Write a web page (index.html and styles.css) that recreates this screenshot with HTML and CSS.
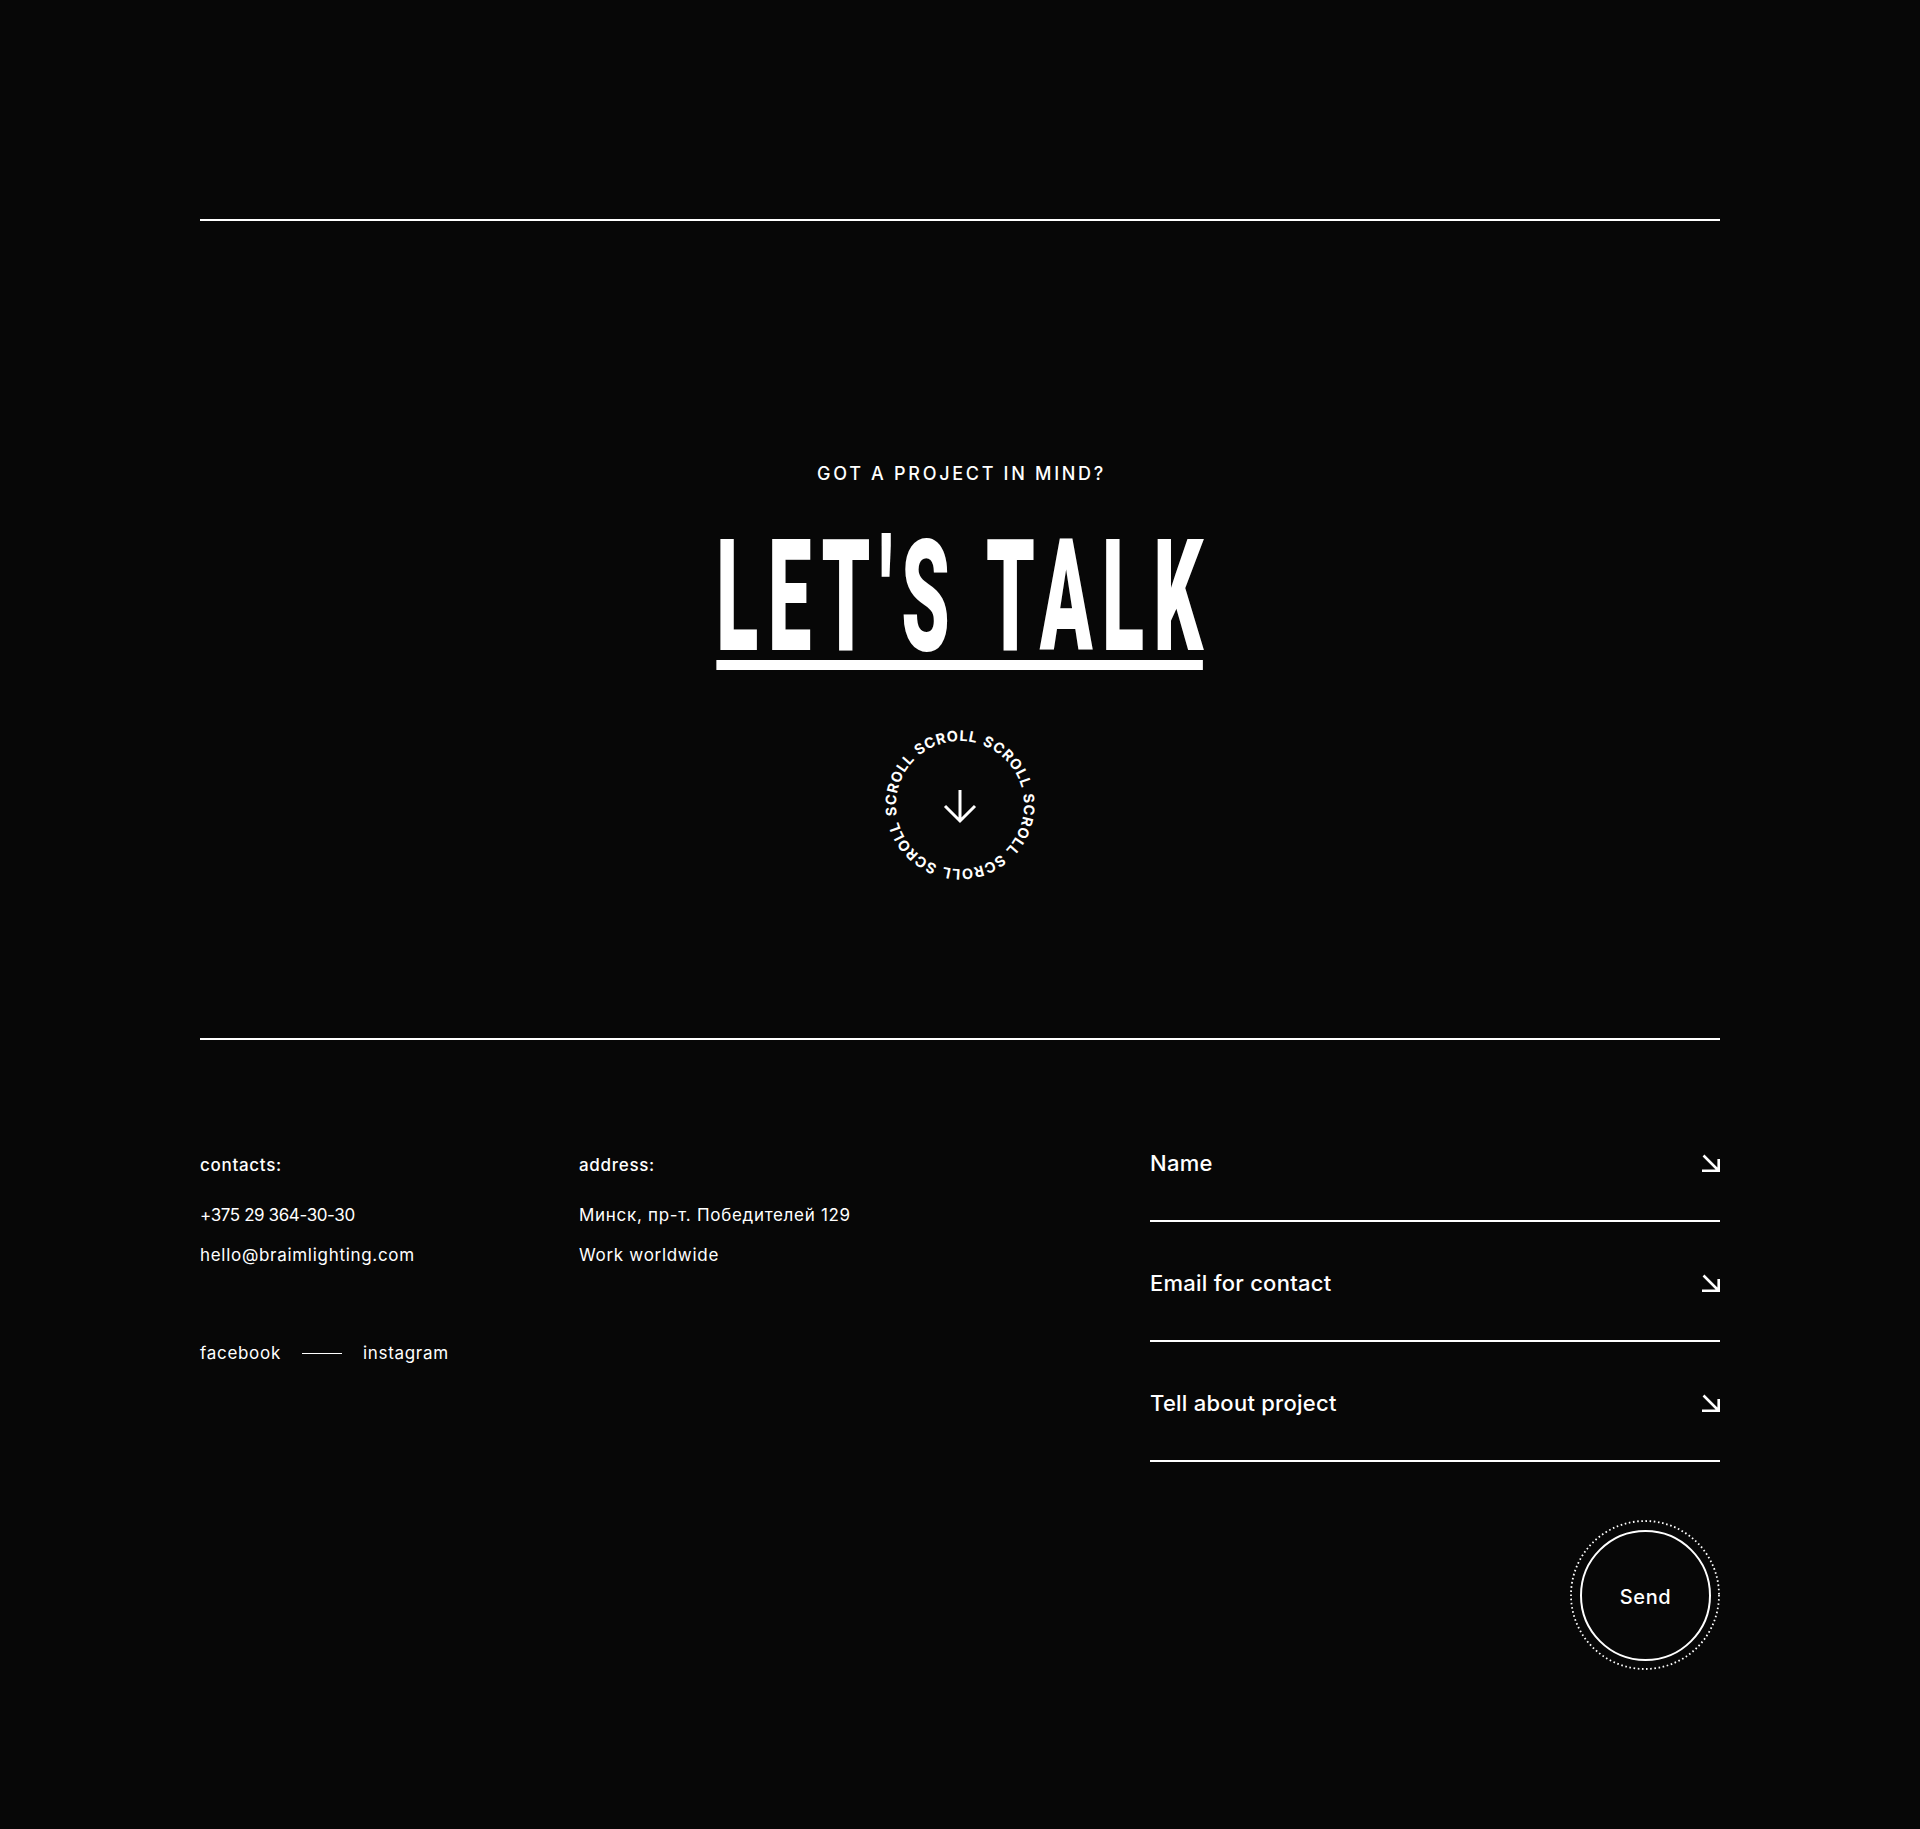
FILE: index.html
```html
<!DOCTYPE html>
<html lang="en">
<head>
<meta charset="utf-8">
<title>Let's talk</title>
<link rel="stylesheet" href="styles.css">
</head>
<body>
<main class="page">
  <div class="rule"></div>
  <section class="hero">
    <p class="eyebrow">GOT A PROJECT IN MIND?</p>
    <h1 class="title"><span class="title-text">LET'S TAL<span class="title-last">K</span></span></h1>
    <div class="scroll">
      <svg class="scroll-svg" viewBox="0 0 150 150" width="150" height="150">
        <defs>
          <path id="scroll-circle" d="M 11,75 A 64,64 0 1,1 139,75 A 64,64 0 1,1 11,75"/>
        </defs>
        <g transform="rotate(50 75 75)">
          <text class="scroll-text"><textPath href="#scroll-circle" startOffset="0">SCROLL</textPath></text>
          <text class="scroll-text"><textPath href="#scroll-circle" startOffset="67.02">SCROLL</textPath></text>
          <text class="scroll-text"><textPath href="#scroll-circle" startOffset="134.04">SCROLL</textPath></text>
          <text class="scroll-text"><textPath href="#scroll-circle" startOffset="201.06">SCROLL</textPath></text>
          <text class="scroll-text"><textPath href="#scroll-circle" startOffset="268.08">SCROLL</textPath></text>
          <text class="scroll-text"><textPath href="#scroll-circle" startOffset="335.1">SCROLL</textPath></text>
        </g>
        <path d="M75 60 V91 M60 76 L75 91 L90 76" stroke="#fff" stroke-width="3" fill="none"/>
      </svg>
    </div>
  </section>
  <div class="rule"></div>
  <footer class="footer">
    <div class="col">
      <h3 class="col-title">contacts:</h3>
      <ul class="list">
        <li class="phone">+375 29 364-30-30</li>
        <li>hello@braimlighting.com</li>
      </ul>
      <div class="social">
        <a class="social-link" href="#">facebook</a>
        <span class="dash"></span>
        <a class="social-link" href="#">instagram</a>
      </div>
    </div>
    <div class="col">
      <h3 class="col-title">address:</h3>
      <ul class="list">
        <li>Минск, пр-т. Победителей 129</li>
        <li>Work worldwide</li>
      </ul>
    </div>
    <form class="form">
      <label class="field"><span class="field-label">Name</span>
        <svg class="field-arrow" viewBox="0 0 18 18" width="18" height="18"><path d="M1.5 1.5 L16 16 M0 16.7 H18 M16.7 5 V18" stroke="#fff" stroke-width="2.6" fill="none"/></svg>
      </label>
      <label class="field"><span class="field-label">Email for contact</span>
        <svg class="field-arrow" viewBox="0 0 18 18" width="18" height="18"><path d="M1.5 1.5 L16 16 M0 16.7 H18 M16.7 5 V18" stroke="#fff" stroke-width="2.6" fill="none"/></svg>
      </label>
      <label class="field"><span class="field-label">Tell about project</span>
        <svg class="field-arrow" viewBox="0 0 18 18" width="18" height="18"><path d="M1.5 1.5 L16 16 M0 16.7 H18 M16.7 5 V18" stroke="#fff" stroke-width="2.6" fill="none"/></svg>
      </label>
      <div class="send-row">
        <div class="send-wrap">
          <svg class="send-ring" viewBox="0 0 150 150" width="150" height="150"><circle cx="75" cy="75" r="74" stroke="#fff" stroke-width="1.8" fill="none" stroke-dasharray="1.6 2.6"/></svg>
          <button class="send" type="button">Send</button>
        </div>
      </div>
    </form>
  </footer>
</main>
</body>
</html>
```

FILE: styles.css
```css
html {
  background: #070707;
}

body {
  margin: 0;
  background: #070707;
  color: #fff;
  font-family: Inter, "Noto Sans", sans-serif;
}

.page {
  width: 1520px;
  margin: 0 auto;
  padding-top: 219px;
  padding-bottom: 159px;
}

.rule {
  height: 2px;
  background: #fff;
}

.hero {
  display: flex;
  flex-direction: column;
  align-items: center;
  padding-top: 241px;
  padding-bottom: 158px;
}

.eyebrow {
  margin: 0 0 0 3px;
  font-size: 18px;
  line-height: 24px;
  font-weight: 500;
  letter-spacing: 2.7px;
}

.title {
  display: flex;
  margin: 48px 0 0;
  font-family: Roboto, "Liberation Sans", sans-serif;
  font-weight: 900;
  font-size: 155px;
  line-height: 126px;
}

.title-text {
  display: block;
  transform: scaleX(0.5);
  letter-spacing: 19px;
  border-bottom: 10px solid #fff;
}

.title-last {
  letter-spacing: 0;
}

.scroll {
  margin-top: 60px;
  width: 150px;
  height: 150px;
}

.scroll-svg {
  display: block;
}

.scroll-text {
  fill: #fff;
  font-family: Inter, sans-serif;
  font-size: 14.5px;
  font-weight: 700;
  letter-spacing: 0.7px;
}

.footer {
  display: grid;
  grid-template-columns: 379px 1fr 570px;
  padding-top: 108px;
  align-items: start;
}

.col-title {
  margin: 5px 0 0;
  font-size: 17px;
  line-height: 24px;
  font-weight: 500;
  letter-spacing: 0.7px;
}

.list {
  list-style: none;
  margin: 26px 0 0;
  padding: 0;
  font-size: 17px;
  line-height: 24px;
  letter-spacing: 0.7px;
}

.list li + li {
  margin-top: 16px;
}

.list .phone {
  letter-spacing: -0.4px;
}

.social {
  display: flex;
  align-items: center;
  margin-top: 74px;
  gap: 21px;
  font-size: 17px;
  line-height: 24px;
  letter-spacing: 0.7px;
}

.social-link {
  color: #fff;
  text-decoration: none;
}

.dash {
  width: 40px;
  height: 1px;
  background: #fff;
}

.form {
  display: flex;
  flex-direction: column;
}

.field {
  display: flex;
  justify-content: space-between;
  align-items: center;
  padding-bottom: 42px;
  border-bottom: 2px solid #fff;
}

.field + .field {
  margin-top: 46px;
}

.field-label {
  font-size: 22px;
  line-height: 30px;
  font-weight: 500;
  letter-spacing: 0.25px;
}

.field-arrow {
  display: block;
}

.send-row {
  display: flex;
  justify-content: flex-end;
  margin-top: 58px;
}

.send-wrap {
  position: relative;
  width: 150px;
  height: 150px;
  display: grid;
  place-items: center;
}

.send-ring {
  position: absolute;
  inset: 0;
}

.send {
  width: 131px;
  height: 131px;
  border-radius: 50%;
  border: 2px solid #fff;
  background: transparent;
  color: #fff;
  font-family: Inter, sans-serif;
  font-size: 20px;
  font-weight: 500;
  letter-spacing: 0.6px;
  padding: 4px 0 0 1px;
}
```
